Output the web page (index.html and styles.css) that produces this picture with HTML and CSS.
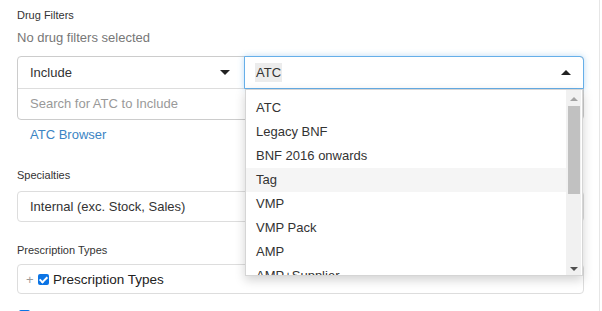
FILE: index.html
```html
<!DOCTYPE html>
<html lang="en">
<head>
  <meta charset="UTF-8">
  <title>Filters</title>
  <link rel="stylesheet" href="styles.css">
</head>
<body>

  <div class="sidebar">
    <div class="field-label first">Drug Filters</div>
    <div class="empty-note">No drug filters selected</div>

    <div class="filter-box">
      <div class="filter-row">
        <div class="select-cell mode">
          <span>Include</span>
          <span class="caret down"></span>
        </div>
        <div class="select-cell type focused">
          <span class="picked">ATC</span>
          <span class="caret up"></span>

          <div class="dropdown">
            <ul class="options">
              <li>ATC</li>
              <li>Legacy BNF</li>
              <li>BNF 2016 onwards</li>
              <li class="hover">Tag</li>
              <li>VMP</li>
              <li>VMP Pack</li>
              <li>AMP</li>
              <li>AMP+Supplier</li>
            </ul>
            <div class="scrollbar">
              <span class="arrow up"></span>
              <div class="track"><div class="thumb"></div></div>
              <span class="arrow down"></span>
            </div>
          </div>
        </div>
      </div>
      <div class="search-row">Search for ATC to Include</div>
    </div>

    <a class="browser-link" href="#">ATC Browser</a>

    <div class="field-label specialties">Specialties</div>
    <div class="plain-select">Internal (exc. Stock, Sales)</div>

    <div class="field-label types">Prescription Types</div>
    <div class="tree-box">
      <span class="expander">+</span>
      <span class="check"></span>
      <span class="tree-text">Prescription Types</span>
    </div>

    <div class="check next"></div>
  </div>

</body>
</html>
```

FILE: styles.css
```css
body {
  margin: 0;
  font-family: "Liberation Sans", Arial, sans-serif;
  color: #333;
  background: #fff;
  overflow: hidden;
}

.sidebar {
  width: 567px;
  height: 311px;
  padding-left: 17px;
  border-right: 1px solid #e6e6e6;
  padding-right: 15px;
}

.field-label {
  font-size: 11px;
  line-height: 16px;
}
.field-label.first {
  padding-top: 7px;
}
.field-label.specialties {
  margin-top: 22px;
}
.field-label.types {
  margin-top: 20px;
}

.empty-note {
  font-size: 13px;
  line-height: 20px;
  margin-top: 5px;
  color: #777;
}

.filter-box {
  margin-top: 8px;
  border: 1px solid #ccc;
  border-radius: 4px;
}

.filter-row {
  display: flex;
  height: 31px;
  border-bottom: 1px solid #ddd;
}

.select-cell {
  display: flex;
  align-items: center;
  justify-content: space-between;
  font-size: 13px;
}
.select-cell.mode {
  width: 227px;
  padding: 0 14px 0 12px;
  box-sizing: border-box;
  border-right: 1px solid #ddd;
}
.select-cell.type {
  position: relative;
  flex: 1;
  padding: 0 12px 0 10px;
  margin: -1px -1px -1px -1px;
  border: 1px solid #66afe9;
  border-radius: 0 4px 0 0;
  box-shadow: 0 0 6px rgba(102, 175, 233, 0.45);
}

.picked {
  background: #ececec;
  padding: 2px 1px;
}

.caret {
  width: 0;
  height: 0;
  border-left: 5px solid transparent;
  border-right: 5px solid transparent;
}
.caret.down {
  border-top: 5px solid #222;
}
.caret.up {
  border-bottom: 5px solid #222;
}

.search-row {
  height: 30px;
  line-height: 30px;
  padding-left: 12px;
  font-size: 13px;
  color: #999;
}

.dropdown {
  position: absolute;
  top: 32px;
  left: 0;
  width: 338px;
  height: 187px;
  display: flex;
  background: #fff;
  border: 1px solid #d5d5d5;
  box-sizing: border-box;
  box-shadow: 0 4px 10px rgba(0, 0, 0, 0.18);
  z-index: 5;
}

.options {
  flex: 1;
  margin: 0;
  padding: 6px 0 0;
  list-style: none;
  overflow: hidden;
}
.options li {
  height: 24px;
  line-height: 24px;
  padding-left: 10px;
  font-size: 13px;
  color: #333;
}
.options li.hover {
  background: #f5f5f5;
}

.scrollbar {
  width: 15px;
  display: flex;
  flex-direction: column;
  align-items: center;
  background: #f1f1f1;
  margin-right: 1px;
}
.arrow {
  width: 0;
  height: 0;
  margin: 7px 0 5px;
  border-left: 4px solid transparent;
  border-right: 4px solid transparent;
}
.arrow.up {
  border-bottom: 4px solid #a3a3a3;
}
.arrow.down {
  margin: 5px 0 4px;
  border-top: 4px solid #505050;
}
.track {
  flex: 1;
  width: 100%;
}
.thumb {
  width: 12px;
  height: 88px;
  margin: 0 auto;
  background: #c1c1c1;
}

.browser-link {
  display: block;
  margin-top: 5px;
  padding-left: 13px;
  font-size: 13px;
  line-height: 20px;
  color: #3b84c4;
  text-decoration: none;
}

.plain-select {
  margin-top: 8px;
  height: 29px;
  line-height: 29px;
  padding-left: 12px;
  border: 1px solid #ddd;
  border-radius: 4px;
  font-size: 13px;
}

.tree-box {
  display: flex;
  align-items: center;
  margin-top: 6px;
  height: 28px;
  padding-left: 8px;
  border: 1px solid #ddd;
  border-radius: 4px;
}
.expander {
  color: #999;
  font-size: 13px;
  width: 12px;
}
.check {
  display: inline-block;
  width: 11px;
  height: 11px;
  margin: 0 4px 0 0;
  background: #0b74e5;
  border-radius: 2px;
  position: relative;
}
.check::after {
  content: "";
  position: absolute;
  left: 3px;
  top: 1px;
  width: 3px;
  height: 6px;
  border: solid #fff;
  border-width: 0 2px 2px 0;
  transform: rotate(45deg);
}
.tree-text {
  font-size: 13.5px;
  color: #222;
}

.check.next {
  display: block;
  margin: 16px 0 0 2px;
}
```
